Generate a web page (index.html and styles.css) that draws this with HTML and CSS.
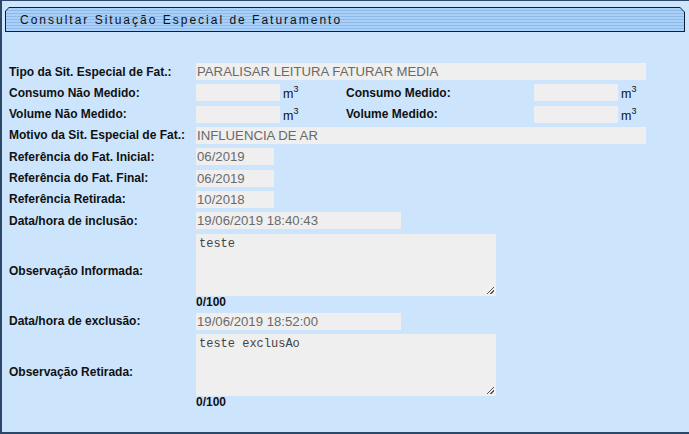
FILE: index.html
```html
<!DOCTYPE html>
<html>
<head>
<meta charset="utf-8">
<link rel="stylesheet" href="styles.css">
</head>
<body>
<div class="page">
  <div class="titlebar"><div class="titlefill"><span class="title">Consultar Situação Especial de Faturamento</span></div></div>
  <div class="form">
    <div class="lbl">Tipo da Sit. Especial de Fat.:</div>
    <div class="span3"><div class="fld w450">PARALISAR LEITURA FATURAR MEDIA</div></div>

    <div class="lbl">Consumo Não Medido:</div>
    <div class="cell"><div class="fld w84"></div><span class="unit">m<sup>3</sup></span></div>
    <div class="lbl">Consumo Medido:</div>
    <div class="cell"><div class="fld w84"></div><span class="unit">m<sup>3</sup></span></div>

    <div class="lbl">Volume Não Medido:</div>
    <div class="cell"><div class="fld w84"></div><span class="unit">m<sup>3</sup></span></div>
    <div class="lbl">Volume Medido:</div>
    <div class="cell"><div class="fld w84"></div><span class="unit">m<sup>3</sup></span></div>

    <div class="lbl">Motivo da Sit. Especial de Fat.:</div>
    <div class="span3"><div class="fld w450">INFLUENCIA DE AR</div></div>

    <div class="lbl">Referência do Fat. Inicial:</div>
    <div class="span3"><div class="fld w78">06/2019</div></div>

    <div class="lbl">Referência do Fat. Final:</div>
    <div class="span3"><div class="fld w78">06/2019</div></div>

    <div class="lbl">Referência Retirada:</div>
    <div class="span3"><div class="fld w78">10/2018</div></div>

    <div class="lbl">Data/hora de inclusão:</div>
    <div class="span3"><div class="fld w205">19/06/2019 18:40:43</div></div>

    <div class="lbl">Observação Informada:</div>
    <div class="span3 stack"><div class="area">teste<span class="grip"></span></div><div class="count">0/100</div></div>

    <div class="lbl">Data/hora de exclusão:</div>
    <div class="span3"><div class="fld w205">19/06/2019 18:52:00</div></div>

    <div class="lbl">Observação Retirada:</div>
    <div class="span3 stack"><div class="area">teste exclusAo<span class="grip"></span></div><div class="count">0/100</div></div>
  </div>
</div>
</body>
</html>
```
FILE: styles.css
```css
html, body {
  margin: 0;
  padding: 0;
}
body {
  width: 689px;
  height: 434px;
  overflow: hidden;
  font-family: "Liberation Sans", Arial, sans-serif;
}
.page {
  box-sizing: border-box;
  width: 689px;
  height: 434px;
  background: #cce5fc;
  border-left: 2px solid #2c4868;
  border-top: 1px solid #2c4868;
  border-bottom: 2px solid #2c4868;
  padding: 6px 4px 0 3px;
}
.titlebar {
  width: 680px;
  height: 25px;
  background: #0f2036;
  clip-path: polygon(4px 0, 675px 0, 680px 5px, 680px 25px, 0 25px, 0 4px);
  padding: 1px;
  box-sizing: border-box;
}
.titlefill {
  height: 23px;
  clip-path: polygon(3px 0, 674px 0, 678px 4px, 678px 23px, 0 23px, 0 3px);
  background: repeating-linear-gradient(to bottom, #abd0f7 0px, #abd0f7 2px, #8cbaec 2px, #8cbaec 3px);
  display: flex;
  align-items: center;
}
.title {
  margin-left: 14px;
  font-size: 12px;
  letter-spacing: 2px;
  color: #111;
}
.form {
  margin-top: 31px;
  margin-left: 4px;
  display: grid;
  grid-template-columns: 187px 150px 188px 150px;
  grid-auto-rows: minmax(17px, auto);
  row-gap: 4.33px;
}
.lbl {
  font-size: 12px;
  font-weight: bold;
  color: #111;
  display: flex;
  align-items: center;
}
.span3 {
  grid-column: 2 / 5;
  display: flex;
  align-items: center;
}
.cell {
  display: flex;
  align-items: center;
  height: 17px;
}
.fld {
  box-sizing: border-box;
  height: 17px;
  background: #efefef;
  color: #6a6a6a;
  font-size: 13.2px;
  line-height: 17px;
  padding-left: 1px;
  white-space: nowrap;
}
.w450 { width: 450px; }
.w84 { width: 84px; }
.w78 { width: 78px; }
.w205 { width: 205px; }
.unit {
  box-sizing: border-box;
  display: block;
  height: 17px;
  font-size: 12.5px;
  color: #111;
  margin-left: 3px;
  line-height: 13px;
  padding-top: 4px;
}
.unit sup {
  font-size: 9px;
  vertical-align: 6px;
  line-height: 0;
}
.stack {
  flex-direction: column;
  align-items: flex-start;
}
.area {
  position: relative;
  box-sizing: border-box;
  width: 300px;
  height: 62px;
  background: #efefef;
  font-family: "Liberation Mono", "Courier New", monospace;
  font-size: 12px;
  color: #444;
  padding: 3px 3px;
  line-height: 14px;
}
.grip {
  position: absolute;
  right: 2px;
  bottom: 2px;
  width: 7px;
  height: 7px;
  background: linear-gradient(135deg, transparent 0 45%, #555 45% 55%, transparent 55% 70%, #555 70% 80%, transparent 80%);
}
.count {
  font-size: 12px;
  font-weight: bold;
  color: #111;
  line-height: 13px;
}
```
